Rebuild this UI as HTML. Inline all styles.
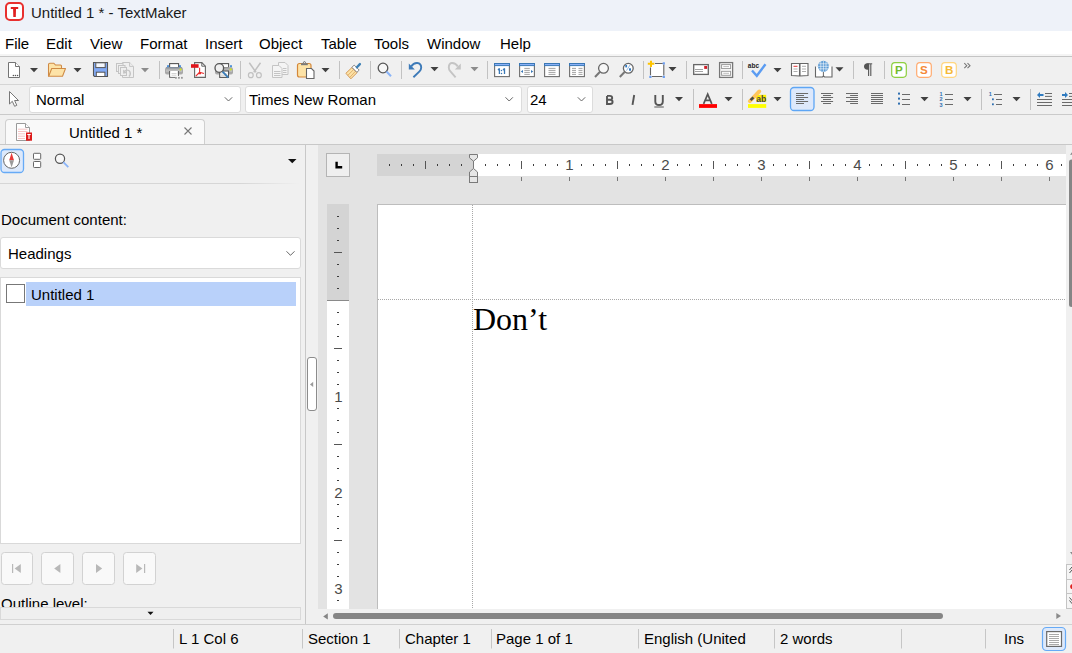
<!DOCTYPE html>
<html><head><meta charset="utf-8">
<style>
*{margin:0;padding:0;box-sizing:border-box}
html,body{width:1072px;height:653px;overflow:hidden;background:#f0f0f0;font-family:"Liberation Sans",sans-serif;color:#000}
.a{position:absolute}
.t{position:absolute;font-size:15px;line-height:15px;white-space:nowrap}
svg{position:absolute;overflow:visible}
</style></head><body>
<!-- title bar -->
<div class="a" style="left:0;top:0;width:1072px;height:31px;background:#eef2f9"></div>
<div class="t" style="left:31px;top:5px;color:#1a1a1a">Untitled 1 * - TextMaker</div>
<!-- menu bar -->
<div class="a" style="left:0;top:31px;width:1072px;height:23px;background:#fff"></div>
<div class="t" style="left:5px;top:36px">File</div>
<div class="t" style="left:46px;top:36px">Edit</div>
<div class="t" style="left:90px;top:36px">View</div>
<div class="t" style="left:140px;top:36px">Format</div>
<div class="t" style="left:205px;top:36px">Insert</div>
<div class="t" style="left:259px;top:36px">Object</div>
<div class="t" style="left:321px;top:36px">Table</div>
<div class="t" style="left:374px;top:36px">Tools</div>
<div class="t" style="left:427px;top:36px">Window</div>
<div class="t" style="left:500px;top:36px">Help</div>
<div class="a" style="left:0;top:54px;width:1072px;height:2px;background:#f4f4f4"></div><div class="a" style="left:0;top:56px;width:1072px;height:1px;background:#c4c4c4"></div>
<!-- toolbar lines -->
<div class="a" style="left:0;top:84px;width:1072px;height:1px;background:#d5d5d5"></div>
<div class="a" style="left:0;top:114px;width:1072px;height:1px;background:#cacaca"></div>
<!-- format toolbar combos -->
<div class="a" style="left:29px;top:86px;width:212px;height:27px;background:#fff;border:1px solid #dcdcdc;border-radius:3px"></div>
<div class="t" style="left:36px;top:92px">Normal</div>
<div class="a" style="left:245px;top:86px;width:277px;height:27px;background:#fff;border:1px solid #dcdcdc;border-radius:3px"></div>
<div class="t" style="left:249px;top:92px">Times New Roman</div>
<div class="a" style="left:527px;top:86px;width:66px;height:27px;background:#fff;border:1px solid #dcdcdc;border-radius:3px"></div>
<div class="t" style="left:530px;top:92px">24</div>
<!-- tab bar -->
<div class="a" style="left:5px;top:119px;width:200px;height:26px;background:#f9f9f9;border:1px solid #cfcfcf;border-bottom:none;border-radius:4px 4px 0 0"></div>
<div class="t" style="left:69px;top:125px">Untitled 1 *</div>
<div class="a" style="left:0;top:144px;width:1072px;height:1px;background:#c8c8c8"></div>
<!-- left panel -->
<div class="a" style="left:0;top:183px;width:300px;height:1px;background:linear-gradient(90deg,#d6d6d6,#d6d6d6 80%,#f0f0f0)"></div>
<div class="t" style="left:1px;top:212px">Document content:</div>
<div class="a" style="left:0;top:237px;width:301px;height:32px;background:#fff;border:1px solid #dadada;border-radius:3px"></div>
<div class="t" style="left:8px;top:246px">Headings</div>
<div class="a" style="left:0;top:277px;width:301px;height:267px;background:#fff;border:1px solid #d9d9d9"></div>
<div class="a" style="left:26px;top:282px;width:270px;height:24px;background:#b9d1fa"></div>
<div class="a" style="left:6px;top:284px;width:19px;height:19px;border:1px solid #777;background:#fff"></div>
<div class="t" style="left:31px;top:287px">Untitled 1</div>
<div class="t" style="left:1px;top:596px">Outline level:</div>
<div class="a" style="left:0;top:607px;width:301px;height:13px;background:#efefef;border:1px solid #d9d9d9"></div>
<!-- splitter -->
<div class="a" style="left:305px;top:145px;width:1px;height:479px;background:#c8c8c8"></div>
<div class="a" style="left:306px;top:145px;width:12px;height:479px;background:#f0f0f0"></div>
<!-- doc area -->
<div class="a" style="left:318px;top:145px;width:748px;height:464px;background:#e3e3e3"></div>
<div class="a" style="left:377px;top:204px;width:689px;height:405px;background:#fff;border-top:1px solid #bdbdbd;border-left:1px solid #bdbdbd"></div>
<div class="a" style="left:378px;top:299px;width:688px;height:1px;background:repeating-linear-gradient(90deg,#a8a8a8 0 1px,transparent 1px 2px)"></div>
<div class="a" style="left:472px;top:205px;width:1px;height:404px;background:repeating-linear-gradient(180deg,#a8a8a8 0 1px,transparent 1px 2px)"></div>
<div class="a" style="left:473px;top:299px;font-family:'Liberation Serif',serif;font-size:32px;line-height:40px;white-space:nowrap">Don’t</div>
<!-- rulers -->
<div class="a" style="left:377px;top:154px;width:689px;height:22px;background:#fff"></div>
<div class="a" style="left:377px;top:154px;width:96px;height:22px;background:#d4d4d4"></div>
<div class="a" style="left:327px;top:204px;width:22px;height:405px;background:#fff"></div>
<div class="a" style="left:327px;top:204px;width:22px;height:96px;background:#d4d4d4"></div>
<div class="a" style="left:326px;top:153px;width:24px;height:24px;background:#efefef;border:1px solid #b4b4b4"></div>
<svg style="left:0;top:0" width="1072" height="653" viewBox="0 0 1072 653">
<rect x="389" y="164" width="1" height="2" fill="#3c3c3c"/>
<rect x="401" y="164" width="1" height="2" fill="#3c3c3c"/>
<rect x="413" y="164" width="1" height="2" fill="#3c3c3c"/>
<rect x="437" y="164" width="1" height="2" fill="#3c3c3c"/>
<rect x="449" y="164" width="1" height="2" fill="#3c3c3c"/>
<rect x="461" y="164" width="1" height="2" fill="#3c3c3c"/>
<rect x="485" y="164" width="1" height="2" fill="#3c3c3c"/>
<rect x="497" y="164" width="1" height="2" fill="#3c3c3c"/>
<rect x="509" y="164" width="1" height="2" fill="#3c3c3c"/>
<rect x="533" y="164" width="1" height="2" fill="#3c3c3c"/>
<rect x="545" y="164" width="1" height="2" fill="#3c3c3c"/>
<rect x="557" y="164" width="1" height="2" fill="#3c3c3c"/>
<rect x="581" y="164" width="1" height="2" fill="#3c3c3c"/>
<rect x="593" y="164" width="1" height="2" fill="#3c3c3c"/>
<rect x="605" y="164" width="1" height="2" fill="#3c3c3c"/>
<rect x="629" y="164" width="1" height="2" fill="#3c3c3c"/>
<rect x="641" y="164" width="1" height="2" fill="#3c3c3c"/>
<rect x="653" y="164" width="1" height="2" fill="#3c3c3c"/>
<rect x="677" y="164" width="1" height="2" fill="#3c3c3c"/>
<rect x="689" y="164" width="1" height="2" fill="#3c3c3c"/>
<rect x="701" y="164" width="1" height="2" fill="#3c3c3c"/>
<rect x="725" y="164" width="1" height="2" fill="#3c3c3c"/>
<rect x="737" y="164" width="1" height="2" fill="#3c3c3c"/>
<rect x="749" y="164" width="1" height="2" fill="#3c3c3c"/>
<rect x="773" y="164" width="1" height="2" fill="#3c3c3c"/>
<rect x="785" y="164" width="1" height="2" fill="#3c3c3c"/>
<rect x="797" y="164" width="1" height="2" fill="#3c3c3c"/>
<rect x="821" y="164" width="1" height="2" fill="#3c3c3c"/>
<rect x="833" y="164" width="1" height="2" fill="#3c3c3c"/>
<rect x="845" y="164" width="1" height="2" fill="#3c3c3c"/>
<rect x="869" y="164" width="1" height="2" fill="#3c3c3c"/>
<rect x="881" y="164" width="1" height="2" fill="#3c3c3c"/>
<rect x="893" y="164" width="1" height="2" fill="#3c3c3c"/>
<rect x="917" y="164" width="1" height="2" fill="#3c3c3c"/>
<rect x="929" y="164" width="1" height="2" fill="#3c3c3c"/>
<rect x="941" y="164" width="1" height="2" fill="#3c3c3c"/>
<rect x="965" y="164" width="1" height="2" fill="#3c3c3c"/>
<rect x="977" y="164" width="1" height="2" fill="#3c3c3c"/>
<rect x="989" y="164" width="1" height="2" fill="#3c3c3c"/>
<rect x="1013" y="164" width="1" height="2" fill="#3c3c3c"/>
<rect x="1025" y="164" width="1" height="2" fill="#3c3c3c"/>
<rect x="1037" y="164" width="1" height="2" fill="#3c3c3c"/>
<rect x="1061" y="164" width="1" height="2" fill="#3c3c3c"/>
<rect x="425" y="161" width="1" height="8" fill="#555"/>
<rect x="521" y="161" width="1" height="8" fill="#555"/>
<rect x="617" y="161" width="1" height="8" fill="#555"/>
<rect x="713" y="161" width="1" height="8" fill="#555"/>
<rect x="809" y="161" width="1" height="8" fill="#555"/>
<rect x="905" y="161" width="1" height="8" fill="#555"/>
<rect x="1001" y="161" width="1" height="8" fill="#555"/>
<rect x="521" y="177" width="1" height="4" fill="#777"/>
<rect x="569" y="177" width="1" height="4" fill="#777"/>
<rect x="617" y="177" width="1" height="4" fill="#777"/>
<rect x="665" y="177" width="1" height="4" fill="#777"/>
<rect x="713" y="177" width="1" height="4" fill="#777"/>
<rect x="761" y="177" width="1" height="4" fill="#777"/>
<rect x="809" y="177" width="1" height="4" fill="#777"/>
<rect x="857" y="177" width="1" height="4" fill="#777"/>
<rect x="905" y="177" width="1" height="4" fill="#777"/>
<rect x="953" y="177" width="1" height="4" fill="#777"/>
<rect x="1001" y="177" width="1" height="4" fill="#777"/>
<rect x="1049" y="177" width="1" height="4" fill="#777"/>
<text x="569.5" y="170.2" text-anchor="middle" font-family="Liberation Sans" font-size="15" fill="#4a4a4a">1</text>
<text x="665.5" y="170.2" text-anchor="middle" font-family="Liberation Sans" font-size="15" fill="#4a4a4a">2</text>
<text x="761.5" y="170.2" text-anchor="middle" font-family="Liberation Sans" font-size="15" fill="#4a4a4a">3</text>
<text x="857.5" y="170.2" text-anchor="middle" font-family="Liberation Sans" font-size="15" fill="#4a4a4a">4</text>
<text x="953.5" y="170.2" text-anchor="middle" font-family="Liberation Sans" font-size="15" fill="#4a4a4a">5</text>
<text x="1049.5" y="170.2" text-anchor="middle" font-family="Liberation Sans" font-size="15" fill="#4a4a4a">6</text>
<path d="M469.5,154.5 H477.5 V157.8 L473.5,161.2 L469.5,157.8 Z M469.5,176.5 V172 L473.5,168.5 L477.5,172 V176.5 Z" fill="#e6e6e6" stroke="#7a7a7a" stroke-width="1"/>
<rect x="469.5" y="176.5" width="8" height="6" fill="#e6e6e6" stroke="#7a7a7a" stroke-width="1"/>
<path d="M473.5,161 V168.5" stroke="#7a7a7a" stroke-width="1"/>
<rect x="337" y="216" width="2" height="1" fill="#3c3c3c"/>
<rect x="337" y="228" width="2" height="1" fill="#3c3c3c"/>
<rect x="337" y="240" width="2" height="1" fill="#3c3c3c"/>
<rect x="334" y="252" width="8" height="1" fill="#555"/>
<rect x="337" y="264" width="2" height="1" fill="#3c3c3c"/>
<rect x="337" y="276" width="2" height="1" fill="#3c3c3c"/>
<rect x="337" y="288" width="2" height="1" fill="#3c3c3c"/>
<rect x="337" y="312" width="2" height="1" fill="#3c3c3c"/>
<rect x="337" y="324" width="2" height="1" fill="#3c3c3c"/>
<rect x="337" y="336" width="2" height="1" fill="#3c3c3c"/>
<rect x="334" y="348" width="8" height="1" fill="#555"/>
<rect x="337" y="360" width="2" height="1" fill="#3c3c3c"/>
<rect x="337" y="372" width="2" height="1" fill="#3c3c3c"/>
<rect x="337" y="384" width="2" height="1" fill="#3c3c3c"/>
<text x="338.5" y="401.6" text-anchor="middle" font-family="Liberation Sans" font-size="15" fill="#4a4a4a">1</text>
<rect x="337" y="408" width="2" height="1" fill="#3c3c3c"/>
<rect x="337" y="420" width="2" height="1" fill="#3c3c3c"/>
<rect x="337" y="432" width="2" height="1" fill="#3c3c3c"/>
<rect x="334" y="444" width="8" height="1" fill="#555"/>
<rect x="337" y="456" width="2" height="1" fill="#3c3c3c"/>
<rect x="337" y="468" width="2" height="1" fill="#3c3c3c"/>
<rect x="337" y="480" width="2" height="1" fill="#3c3c3c"/>
<text x="338.5" y="497.6" text-anchor="middle" font-family="Liberation Sans" font-size="15" fill="#4a4a4a">2</text>
<rect x="337" y="504" width="2" height="1" fill="#3c3c3c"/>
<rect x="337" y="516" width="2" height="1" fill="#3c3c3c"/>
<rect x="337" y="528" width="2" height="1" fill="#3c3c3c"/>
<rect x="334" y="540" width="8" height="1" fill="#555"/>
<rect x="337" y="552" width="2" height="1" fill="#3c3c3c"/>
<rect x="337" y="564" width="2" height="1" fill="#3c3c3c"/>
<rect x="337" y="576" width="2" height="1" fill="#3c3c3c"/>
<text x="338.5" y="593.6" text-anchor="middle" font-family="Liberation Sans" font-size="15" fill="#4a4a4a">3</text>
<rect x="337" y="600" width="2" height="1" fill="#3c3c3c"/>
<rect x="327" y="300" width="22" height="1" fill="#8a8a8a"/>
</svg>
<!-- v scrollbar -->
<div class="a" style="left:1066px;top:145px;width:6px;height:464px;background:#f0f0f0"></div>
<!-- h scrollbar -->
<div class="a" style="left:318px;top:609px;width:754px;height:15px;background:#f0f0f0"></div>
<div class="a" style="left:333px;top:613px;width:610px;height:6px;background:#858585;border-radius:3px"></div>
<!-- status bar -->
<div class="a" style="left:0;top:624px;width:1072px;height:1px;background:#d0d0d0"></div>
<div class="t" style="left:179px;top:631px">L 1 Col 6</div>
<div class="t" style="left:308px;top:631px">Section 1</div>
<div class="t" style="left:405px;top:631px">Chapter 1</div>
<div class="t" style="left:496px;top:631px">Page 1 of 1</div>
<div class="t" style="left:644px;top:631px">English (United</div>
<div class="t" style="left:780px;top:631px">2 words</div>
<div class="t" style="left:1004px;top:631px">Ins</div>
<svg style="left:0;top:0" width="1072" height="653" viewBox="0 0 1072 653">
<!-- app icon -->
<rect x="6" y="3" width="17" height="17" rx="4" fill="#fff" stroke="#e8302f" stroke-width="2"/>
<path d="M10.8,7 H18.2 V9 H16 L15.8,17 H13.3 L13.1,9 H10.8 Z" fill="#e02020"/>
<!-- ===== toolbar 1 ===== -->
<g fill="#404040">
<path d="M30.0,68.0 H38.0 L34.0,72.2 Z"/>
<path d="M73.5,68.0 H81.5 L77.5,72.2 Z"/>
<path d="M321.5,68.0 H329.5 L325.5,72.2 Z"/>
<path d="M430.5,67.0 H438.5 L434.5,71.2 Z"/>
<path d="M668.5,67.0 H676.5 L672.5,71.2 Z"/>
<path d="M773.5,68.0 H781.5 L777.5,72.2 Z"/>
<path d="M835.5,67.2 H843.5 L839.5,71.4 Z"/>
</g>
<g fill="#8c8c8c">
<path d="M141.0,68.0 H149.0 L145.0,72.2 Z"/>
<path d="M470.5,67.0 H478.5 L474.5,71.2 Z"/>
</g>
<g stroke="#c2c2c2" stroke-width="1">
<path d="M159.5,61 V79 M240.5,61 V79 M339.5,61 V79 M370.5,61 V79 M401.5,61 V79 M487.5,61 V79 M643.5,61 V79 M686.5,61 V79 M742.5,61 V79 M853.5,61 V79 M884.5,61 V79"/>
</g>
<!-- new doc -->
<path d="M8.5,62.5 H15.5 L19.5,66.5 V77.5 H8.5 Z" fill="#fff" stroke="#747474"/>
<path d="M15.5,62.5 V66.5 H19.5" fill="#fff" stroke="#747474"/>
<circle cx="13.35" cy="75.4" r="0.75" fill="#555"/><circle cx="15.45" cy="75.4" r="0.75" fill="#555"/><circle cx="17.55" cy="75.4" r="0.75" fill="#555"/>
<!-- open folder -->
<path d="M48.5,76.5 V64.5 Q48.5,63.2 49.8,63.2 H53.8 L55.5,65 H60.5 Q61.5,65 61.5,66 V68.5" fill="#fde3a7" stroke="#cf8a45" stroke-width="1.05"/>
<path d="M48.7,76.3 L51.7,68.5 H65.5 L62.5,76.3 Z" fill="#fde3a7" stroke="#cf8a45" stroke-width="1.05" stroke-linejoin="round"/>
<!-- save -->
<path d="M93.5,62.5 H107.5 V76.5 H94.5 L93.5,75.5 Z" fill="#82aaf5" stroke="#555" stroke-width="1.1"/>
<rect x="95.8" y="62.8" width="9.4" height="4.8" fill="#f4f7fd" stroke="#555" stroke-width="1"/>
<rect x="96.3" y="72.2" width="8.6" height="4.3" fill="#fff" stroke="#555" stroke-width="1"/>
<!-- disabled revert -->
<g fill="#efefef" stroke="#c4c4c4" stroke-width="1">
<path d="M122.5,62.5 H129.6 L133.5,66.4 V77.5 H122.5 Z"/>
<path d="M129.6,62.5 V66.4 H133.5"/>
<rect x="116.5" y="63.5" width="6.5" height="8"/>
<rect x="118.5" y="65.5" width="6.5" height="8"/>
<rect x="120.5" y="67.5" width="6" height="8"/>
</g>
<path d="M124,72 C125.5,69.5 129,69.5 130,72 C130.8,74 130,75.5 129,76.5" fill="none" stroke="#c4c4c4" stroke-width="1.4"/>
<path d="M123,69.5 L123.2,73.8 L127,73 Z" fill="#c4c4c4"/>
<!-- printer -->
<rect x="167" y="65.2" width="2" height="2.2" fill="#4f92d9"/><rect x="179" y="65.2" width="2" height="2.2" fill="#4f92d9"/>
<rect x="169.6" y="63.6" width="9" height="4" fill="#fff" stroke="#555" stroke-width="1.1"/>
<rect x="165" y="67.3" width="18" height="7.3" rx="2" fill="#a9a9a9"/>
<rect x="166" y="67.3" width="16" height="1" fill="#7a8aa0"/>
<rect x="166" y="69.5" width="16" height="2.5" fill="#bcbcbc"/>
<path d="M180.6,68 L182,69.4 L180.6,70.8 L179.2,69.4 Z" fill="#c9e02a"/>
<path d="M169.7,71 V77.2 H175 M178.3,71 V76" fill="#fff" stroke="#555" stroke-width="1.1"/>
<rect x="170.3" y="71" width="7.5" height="5.7" fill="#fff"/>
<path d="M171.5,73.5 H176.5 M171.5,75.2 H176.5" stroke="#c8c8c8" stroke-width="0.8"/>
<rect x="175" y="76.9" width="1.8" height="1.8" fill="#999"/><rect x="178" y="76.9" width="1.8" height="1.8" fill="#999"/><rect x="181" y="76.9" width="1.8" height="1.8" fill="#999"/>
<!-- pdf -->
<path d="M194.6,62.6 H201.8 L205.4,66.2 V77.4 H194.6 Z" fill="#fff" stroke="#666" stroke-width="1.1"/>
<path d="M201.8,62.6 V66.2 H205.4" fill="none" stroke="#666" stroke-width="1"/>
<rect x="191" y="64.2" width="7.6" height="3.6" fill="#e0141b"/>
<path d="M199.6,67.8 V72.2 L195.8,76.2 M199.6,72.2 L203.9,73.6 M198.2,73.6 H201" fill="none" stroke="#ea2a2a" stroke-width="1.1"/>
<!-- print preview -->
<rect x="230" y="65.2" width="2" height="2.2" fill="#4f92d9"/>
<rect x="219.6" y="63.6" width="9" height="4" fill="#fff" stroke="#555" stroke-width="1.1"/>
<rect x="215" y="67.3" width="18" height="7.3" rx="2" fill="#a9a9a9"/>
<rect x="216" y="69.5" width="16" height="2.5" fill="#bcbcbc"/>
<path d="M230.8,68 L232.2,69.4 L230.8,70.8 L229.4,69.4 Z" fill="#c9e02a"/>
<rect x="219.7" y="71" width="8.8" height="6.4" fill="#fff" stroke="#555" stroke-width="1.1"/>
<path d="M221,74 H227 M221,75.7 H227" stroke="#c8c8c8" stroke-width="0.8"/>
<circle cx="219.3" cy="68" r="4.3" fill="#f0f0f0" stroke="#555" stroke-width="1.3"/>
<path d="M222.6,71.6 L228.3,77.6" stroke="#3b7db8" stroke-width="2"/>
<!-- scissors disabled -->
<path d="M249.3,62.8 L256,72.2 M260.5,62.8 L253.8,72.2" stroke="#c0c0c0" stroke-width="1.5" fill="none"/>
<ellipse cx="250.8" cy="75.2" rx="2.4" ry="2.5" fill="none" stroke="#c0c0c0" stroke-width="1.2"/>
<ellipse cx="258.9" cy="75.2" rx="2.4" ry="2.5" fill="none" stroke="#c0c0c0" stroke-width="1.2"/>
<!-- copy disabled -->
<g fill="#f4f4f4" stroke="#c4c4c4" stroke-width="1">
<path d="M278.5,62.5 H285 L288,65.5 V74.5 H278.5 Z"/>
<path d="M272.5,65.5 H279 L282,68.5 V77.5 H272.5 Z"/>
<path d="M274,71.5 H280.5 M274,73.5 H280.5 M274,75.5 H280.5 M283,68.5 H286.5 M283,70.5 H286.5 M283,72.5 H286.5" fill="none"/>
</g>
<!-- paste -->
<rect x="297.5" y="63.5" width="13.5" height="13.5" rx="2" fill="#fde3a7" stroke="#d4883a" stroke-width="1.2"/>
<rect x="301" y="63.3" width="6.8" height="1.9" fill="#7a7a7a"/><path d="M302.9,63.3 L304.45,61.1 L306,63.3 Z" fill="#fff" stroke="#7a7a7a" stroke-width="0.9"/>
<path d="M306.5,68.5 H311.5 L314,71 V78.5 H306.5 Z" fill="#fff" stroke="#666" stroke-width="1.1"/>
<!-- brush -->
<g transform="translate(-0.6,0.8)">
<path d="M346.5,72.5 L352.5,66.8 L357.5,72 L351.5,78 Z" fill="#fde3a7" stroke="#d49a55" stroke-width="1"/>
<path d="M348.5,74.5 L354.5,68.5 M350.5,76.5 L356,70.5" stroke="#d49a55" stroke-width="0.7"/>
<path d="M352.5,66.5 L354.8,64.3 L359.8,69.3 L357.5,71.5 Z" fill="#fff" stroke="#888"/>
<path d="M357.5,66.5 L360.5,63.3" stroke="#3d80b5" stroke-width="2.4" stroke-linecap="round"/>
</g>
<!-- search -->
<circle cx="383" cy="68" r="4.8" fill="#f7f7f7" stroke="#555" stroke-width="1.3"/>
<path d="M386.5,71.5 L391,76.2" stroke="#8ab4f8" stroke-width="2"/>
<!-- undo -->
<path d="M411.2,66.4 C413,63.6 415.3,62.9 417.2,63 C419.8,63.3 421.2,65.5 421.2,67.5 C421.2,69 420.5,70.3 419.5,71.3 L413.4,77.3" fill="none" stroke="#3d7ab8" stroke-width="1.9"/>
<path d="M408.8,63.4 V69.4 H414.8 Z" fill="#3d7ab8"/>
<!-- redo disabled -->
<path d="M457.8,66.4 C456,63.6 453.7,62.9 451.8,63 C450,63.3 448.8,65.5 448.8,67.5 C448.8,69 449.4,70.3 450.2,71.2 L455.6,77.3" fill="none" stroke="#c4c4c4" stroke-width="1.9"/>
<path d="M460.8,63.4 V69.4 H454.8 Z" fill="#c4c4c4"/>
<!-- view icons -->
<g fill="#fff" stroke="#6e6e6e" stroke-width="1.1">
<rect x="494.6" y="64" width="14.8" height="12.6"/>
<rect x="519.6" y="64" width="14.8" height="12.6"/>
<rect x="544.6" y="64" width="14.8" height="12.6"/>
<rect x="569.6" y="64" width="14.8" height="12.6"/>
</g>
<g fill="#8ab0f8" stroke="#3a78b5" stroke-width="1">
<rect x="494.5" y="63.5" width="15" height="2.1"/>
<rect x="519.5" y="63.5" width="15" height="2.1"/>
<rect x="544.5" y="63.5" width="15" height="2.1"/>
<rect x="569.5" y="63.5" width="15" height="2.1"/>
</g>
<path d="M498,69.9 L499.4,68.6 V74 M503,69.9 L504.5,68.6 V74" fill="none" stroke="#3a78b5" stroke-width="1.3" stroke-linejoin="bevel"/><circle cx="501.5" cy="70.6" r="0.75" fill="#3a78b5"/><circle cx="501.5" cy="73.4" r="0.75" fill="#3a78b5"/>
<g stroke="#8a8a8a" stroke-width="0.8">
<path d="M524.3,68.4 H529.8 M524.3,70.4 H529.8 M524.3,72.4 H529.8 M524.3,74.4 H529.8"/>
<path d="M548.5,68.4 H555.5 M548.5,70.4 H555.5 M548.5,72.4 H555.5 M548.5,74.4 H555.5"/>
<path d="M572,68.4 H576 M572,70.4 H576 M572,72.4 H576 M572,74.4 H576 M578.5,68.4 H582.5 M578.5,70.4 H582.5 M578.5,72.4 H582.5 M578.5,74.4 H582.5"/>
</g>
<path d="M520.8,71.5 L523,69.9 V73.1 Z M533.2,71.5 L531,69.9 V73.1 Z" fill="#3a78b5"/>
<!-- zoom -->
<circle cx="603.5" cy="68.3" r="4.9" fill="#f7f7f7" stroke="#666" stroke-width="1.3"/>
<path d="M599.8,72 L595,77" stroke="#777" stroke-width="2"/>
<circle cx="628.3" cy="68.3" r="4.9" fill="#fff" stroke="#666" stroke-width="1.3"/>
<path d="M624.6,72 L619.8,77" stroke="#777" stroke-width="2"/>
<path d="M626.5,70.6 L630,65" stroke="#7aa6d8" stroke-width="0.8"/>
<rect x="625.3" y="65" width="1.8" height="2.4" fill="#2f78c0"/><rect x="629" y="68.3" width="2" height="2.4" fill="#2f78c0"/>
<!-- frame -->
<rect x="651" y="64" width="12.3" height="12.2" fill="#fff"/>
<path d="M655,63.5 H662.8 M651.8,76.5 H662.4 M650.5,67.4 V75.3 M663.8,64.5 V75.6" stroke="#666" stroke-width="1.1"/>
<g fill="#6a9cf0"><rect x="649.3" y="75.8" width="2.2" height="2.2"/><rect x="662.7" y="62.3" width="2.2" height="2.2"/><rect x="662.7" y="75.8" width="2.2" height="2.2"/></g>
<path d="M647.8,63.8 H654.3 M651,60.8 V67" stroke="#ffc400" stroke-width="2"/>
<!-- envelope -->
<rect x="693.7" y="64.6" width="14.6" height="9.8" fill="#fff" stroke="#666" stroke-width="1.3"/>
<rect x="704.2" y="66" width="2.9" height="2.9" fill="#d0202a"/>
<path d="M695,69.5 H703 M695,71.5 H703" stroke="#999" stroke-width="0.9"/>
<!-- two boxes -->
<rect x="719.6" y="62.6" width="13" height="14.8" fill="#fff" stroke="#777" stroke-width="1.3"/>
<rect x="721.6" y="64.6" width="9" height="4" fill="#fff" stroke="#999" stroke-width="1"/>
<rect x="721.6" y="71.3" width="9" height="4" fill="#fff" stroke="#999" stroke-width="1"/>
<path d="M723.3,66.6 H729 M723.3,73.3 H729" stroke="#aaa" stroke-width="0.8"/>
<!-- spell -->
<text x="747.8" y="67.8" font-family="Liberation Sans" font-weight="bold" font-size="6.5" fill="#222">abc</text>
<path d="M752,70.5 L756.8,75.8 L765.5,64.2" fill="none" stroke="#5b9cf2" stroke-width="2.4"/>
<!-- book -->
<path d="M791.5,63.5 H799.5 V76 L791.5,75.5 Z M800,76 V63.5 H808 V75.5 Z" fill="#fff" stroke="#666" stroke-width="1.1"/>
<path d="M793.5,66.3 H797.5" stroke="#e02020" stroke-width="0.9"/>
<path d="M793.5,69 H797.5 M793.5,71.5 H797.5 M802,66.3 H806 M802,69 H806 M802,71.5 H806" stroke="#999" stroke-width="0.8"/>
<!-- globe book -->
<path d="M815.5,66.5 V77 H822.5 L823.5,76 L824.5,77 H832 V66.5" fill="#fff" stroke="#666" stroke-width="1.1"/>
<circle cx="823.4" cy="66.3" r="5.5" fill="#5b9bd5"/>
<path d="M818,66.3 H829 M823.4,61 V71.5 M819,63.8 H828 M819,68.8 H828 M820.8,61.5 V71 M826,61.5 V71" stroke="#fff" stroke-width="0.6"/>
<path d="M823.4,72 V76.5" stroke="#666"/>
<!-- pilcrow -->
<path d="M868.6,64 V75.9 M870.8,64 V75.9" stroke="#555" stroke-width="1.1"/>
<path d="M866.5,63.8 H872.2" stroke="#555" stroke-width="1"/>
<path d="M869.1,63.4 H866.8 C864.8,63.4 864,65.2 864,66.5 C864,68.2 865.2,69.8 867.5,69.8 H869.1 Z" fill="#555"/>
<!-- P S B -->
<rect x="891.7" y="62.7" width="14.6" height="14.6" rx="3.2" fill="#fff" stroke="#8dcf40" stroke-width="1.2"/>
<rect x="916.7" y="62.7" width="14.6" height="14.6" rx="3.2" fill="#fff" stroke="#ffab70" stroke-width="1.2"/>
<rect x="941.7" y="62.7" width="14.6" height="14.6" rx="3.2" fill="#fff" stroke="#ffd680" stroke-width="1.2"/>
<text x="895" y="74.1" font-family="Liberation Sans" font-weight="bold" font-size="11.6" fill="#72bb2f">P</text>
<text x="919.9" y="74.1" font-family="Liberation Sans" font-weight="bold" font-size="11.6" fill="#f58a3a">S</text>
<text x="944.9" y="74.1" font-family="Liberation Sans" font-weight="bold" font-size="11.6" fill="#f5b937">B</text>
<path d="M964.3,63.2 L966.8,65.7 L964.3,68.2 M967.5,63.2 L970,65.7 L967.5,68.2" fill="none" stroke="#777" stroke-width="1.1"/>
</svg>

<svg style="left:0;top:0" width="1072" height="653" viewBox="0 0 1072 653">
<!-- cursor -->
<path d="M9.5,91.5 V104 L12.3,101.3 L14.6,106.3 L16.8,105.3 L14.6,100.5 H18.5 Z" fill="#fff" stroke="#777" stroke-width="1" stroke-linejoin="round"/>
<!-- combo chevrons -->
<g fill="none" stroke="#666" stroke-width="1">
<path d="M224.8,97.3 L228.5,101 L232.2,97.3"/>
<path d="M505.5,97.3 L509.2,101 L512.9,97.3"/>
<path d="M577.8,97.3 L581.5,101 L585.2,97.3"/>
</g>
<!-- B I U -->
<path d="M607,95.9 H609.8 C611.5,95.9 612.2,96.8 612.2,98 C612.2,99.2 611.3,99.8 609.8,99.8 H607 M609.8,99.8 C611.8,99.8 612.6,100.6 612.6,102 C612.6,103.5 611.7,104 609.8,104 H607 V95.9" fill="none" stroke="#555" stroke-width="1.9"/>
<path d="M634.2,95 L632.5,104.8" stroke="#555" stroke-width="1.9"/>
<path d="M655.3,95 V101.5 C655.3,104 656.8,105 659,105 C661.2,105 662.8,104 662.8,101.5 V95" fill="none" stroke="#555" stroke-width="1.9"/>
<path d="M654.3,107 H663.8" stroke="#555" stroke-width="1"/>
<g fill="#404040">
<path d="M675.0,97.0 H683.0 L679.0,101.2 Z"/>
<path d="M724.5,97.0 H732.5 L728.5,101.2 Z"/>
<path d="M773.5,97.0 H781.5 L777.5,101.2 Z"/>
<path d="M920.5,97.0 H928.5 L924.5,101.2 Z"/>
<path d="M963.5,97.0 H971.5 L967.5,101.2 Z"/>
<path d="M1012.5,97.0 H1020.5 L1016.5,101.2 Z"/>
</g>
<g stroke="#c2c2c2" stroke-width="1">
<path d="M693.5,89 V110 M742.5,89 V110 M981.5,89 V110 M1030.5,89 V110"/>
</g>
<!-- font color A -->
<path d="M703.6,103.8 L707.7,94.2 L711.8,103.8 M705.2,100.3 H710.2" fill="none" stroke="#555" stroke-width="1.7"/>
<rect x="699" y="104.1" width="18" height="3.8" fill="#f00"/>
<!-- highlighter -->
<rect x="748" y="104.1" width="18.2" height="3.8" fill="#ffff00"/>
<rect x="756" y="94.8" width="10.2" height="7" fill="#ffee00"/>
<text x="756.3" y="101.6" font-family="Liberation Sans" font-weight="bold" font-size="8.5" fill="#444">ab</text>
<path d="M749.8,101.2 L759.3,91.4" stroke="#ffc65a" stroke-width="3.8" stroke-linecap="round"/>
<path d="M750.6,100.2 L753.4,97.4" stroke="#4a4a4a" stroke-width="2.6"/>
<!-- align left button -->
<rect x="790.5" y="87.5" width="23.5" height="23" rx="3.5" fill="#dde8fb" stroke="#5ea6f5" stroke-width="1.3"/>
<g stroke="#6a6a6a" stroke-width="1">
<path d="M796,93.5 H808.1 M796,95.5 H804 M796,97.5 H808.1 M796,99.5 H804 M796,101.5 H808.1 M796,103.5 H804"/>
<path d="M821,93.5 H833.1 M823,95.5 H831 M821,97.5 H833.1 M823,99.5 H831 M821,101.5 H833.1 M823,103.5 H831"/>
<path d="M846,93.5 H858 M850.1,95.5 H858 M846,97.5 H858 M850.1,99.5 H858 M846,101.5 H858 M850.1,103.5 H858"/>
<path d="M871,93.5 H883 M871,95.5 H883 M871,97.5 H883 M871,99.5 H883 M871,101.5 H883 M871,103.5 H883"/>
</g>
<!-- bullets -->
<g fill="#2f6fb0"><rect x="898" y="92.6" width="2" height="2"/><rect x="898" y="97.6" width="2" height="2"/><rect x="898" y="102.6" width="2" height="2"/></g>
<path d="M902,94.5 H910 M902,99.5 H910 M902,104.5 H910" stroke="#6a6a6a" stroke-width="1"/>
<!-- numbered -->
<text x="939.5" y="95.5" font-family="Liberation Sans" font-weight="bold" font-size="5.5" fill="#2f6fb0">1</text>
<text x="939.5" y="101" font-family="Liberation Sans" font-weight="bold" font-size="5.5" fill="#2f6fb0">2</text>
<text x="939.5" y="106.5" font-family="Liberation Sans" font-weight="bold" font-size="5.5" fill="#2f6fb0">3</text>
<path d="M945,94.5 H953 M945,99.5 H953 M945,104.5 H953" stroke="#6a6a6a" stroke-width="1"/>
<!-- outline -->
<text x="988.7" y="95.5" font-family="Liberation Sans" font-weight="bold" font-size="5.5" fill="#2f6fb0">1</text>
<g fill="#2f6fb0"><rect x="992" y="98.4" width="1.8" height="1.8"/><rect x="992" y="103.4" width="1.8" height="1.8"/></g>
<path d="M994,94.5 H1002 M996,99.5 H1002 M996,104.5 H1002" stroke="#6a6a6a" stroke-width="1"/>
<!-- indent -->
<path d="M1037,95 L1040,92 V98 Z" fill="#2f7bc0"/>
<path d="M1039.5,95 H1043.5" stroke="#2f7bc0" stroke-width="2"/>
<path d="M1045,93.5 H1052 M1045,96.4 H1052 M1037,99.5 H1052 M1037,102.5 H1052 M1037,105.5 H1052" stroke="#6a6a6a" stroke-width="1"/>
<path d="M1068,95 L1065,92 V98 Z" fill="#2f7bc0"/>
<path d="M1062,95 H1066" stroke="#2f7bc0" stroke-width="2"/>
<path d="M1069,93.5 H1073 M1069,96.4 H1073 M1062,99.5 H1073 M1062,102.5 H1073 M1062,105.5 H1073" stroke="#6a6a6a" stroke-width="1"/>
<!-- tab doc icon -->
<path d="M16.5,123.5 H25.5 L29.5,127.5 V140.5 H16.5 Z" fill="#fff" stroke="#9a9a9a" stroke-width="1"/>
<path d="M25.5,123.5 V127.5 H29.5" fill="#fff" stroke="#9a9a9a"/>
<path d="M18,129.2 H27.5 M18,131.5 H27.5 M18,133.8 H25 M18,136.2 H25 M18,138.5 H25" stroke="#f4b8b8" stroke-width="0.8"/>
<rect x="26" y="132.5" width="6" height="8.2" fill="#dd1c1c"/>
<path d="M27.3,134.5 H30.7 M29,134.5 V139" stroke="#fff" stroke-width="1.1"/>
<!-- tab close -->
<path d="M184.5,127.5 L191.5,134.5 M191.5,127.5 L184.5,134.5" stroke="#777" stroke-width="1.1"/>
<!-- left panel icons -->
<rect x="1" y="149.5" width="22.5" height="23" rx="3.5" fill="#dde9fb" stroke="#66aaf6" stroke-width="1.3"/>
<circle cx="11.6" cy="160.3" r="8" fill="#fff" stroke="#666" stroke-width="1"/>
<path d="M11.6,152.8 L14,160.3 H9.2 Z" fill="#e83a3a"/>
<path d="M11.6,167.6 L14,160.3 H9.2 Z" fill="#9a9a9a"/>
<rect x="33.5" y="153.3" width="7.2" height="6" rx="0.8" fill="#fff" stroke="#666" stroke-width="1"/>
<rect x="33.5" y="161.5" width="7.2" height="6" rx="0.8" fill="#fff" stroke="#666" stroke-width="1"/>
<circle cx="60" cy="158.8" r="4.6" fill="#f7f7f7" stroke="#555" stroke-width="1.2"/>
<path d="M63.3,162.2 L68.3,167.2" stroke="#8ab4f8" stroke-width="1.8"/>
<path d="M288,159 H296.5 L292.25,163.3 Z" fill="#111"/>
<!-- headings chevron -->
<path d="M286.5,251.3 L290.5,255.3 L294.5,251.3" fill="none" stroke="#666" stroke-width="1"/>
<!-- checkbox -->
<rect x="6.5" y="284.5" width="18" height="18" fill="#fff" stroke="#777" stroke-width="1"/>
<!-- nav buttons -->
<g fill="#f9f9f9" stroke="#d2d2d2" stroke-width="1">
<rect x="1.5" y="552.5" width="31" height="32" rx="3"/>
<rect x="41.5" y="552.5" width="32" height="32" rx="3"/>
<rect x="82.5" y="552.5" width="32" height="32" rx="3"/>
<rect x="123.5" y="552.5" width="32" height="32" rx="3"/>
</g>
<g fill="#b8b8b8">
<rect x="12" y="564" width="1.2" height="9"/><path d="M20.8,564 V573 L14.6,568.5 Z"/>
<path d="M60.4,564 V573 L54.2,568.5 Z"/>
<path d="M96,564 V573 L102.2,568.5 Z"/>
<path d="M136.2,564 V573 L142.4,568.5 Z"/><rect x="144" y="564" width="1.2" height="9"/>
</g>
<path d="M147.5,611.7 H153.5 L150.5,615 Z" fill="#111"/>
<!-- splitter handle -->
<rect x="307.5" y="357.5" width="9" height="53" rx="2.5" fill="#fff" stroke="#8c8c8c" stroke-width="1"/>
<path d="M313.2,381.8 V387 L310,384.4 Z" fill="#9a9a9a"/>
<!-- ruler tab stop box -->
<path d="M336.6,161.8 V167.2 H342.2" fill="none" stroke="#000" stroke-width="2.4"/>
<!-- h scrollbar arrows -->
<path d="M327.8,613.3 V619.6 L323.2,616.45 Z" fill="#858585"/>
<path d="M1056.3,613 V619 L1061,616 Z" fill="#8a8a8a"/>
<!-- v scrollbar -->
<path d="M1070,154.7 L1073,151 L1076,154.7 Z" fill="#888"/>
<rect x="1069" y="159.6" width="5" height="147.3" rx="2.5" fill="#858585"/>
<path d="M1070,552 H1076 L1073,556 Z" fill="#888"/>
<g fill="#f5f5f5" stroke="#c4c4c4" stroke-width="1"><rect x="1066.5" y="564.5" width="10" height="15"/><rect x="1066.5" y="579.5" width="10" height="14"/><rect x="1066.5" y="593.5" width="10" height="15"/></g>
<circle cx="1072.8" cy="586.6" r="2.6" fill="#e02020"/>
<path d="M1069.5,573 L1072,570 L1074.5,573 M1069.5,570 L1072,567 L1074.5,570" fill="none" stroke="#555" stroke-width="1"/>
<path d="M1069.5,597.5 L1072,600.5 L1074.5,597.5 M1069.5,600.5 L1072,603.5 L1074.5,600.5" fill="none" stroke="#555" stroke-width="1"/>
<!-- status view button -->
<rect x="1042.5" y="627.5" width="23" height="23" rx="4" fill="#dde9fb" stroke="#66aaf6" stroke-width="1.2"/>
<rect x="1046.7" y="631.6" width="14.8" height="14.8" fill="#fff" stroke="#6a6a6a" stroke-width="1.2"/>
<path d="M1049,634.5 H1059 M1049,636.5 H1059 M1049,638.5 H1059 M1049,640.5 H1059 M1049,642.5 H1059 M1049,644.5 H1059" stroke="#a0a0a0" stroke-width="0.9"/>
<!-- status separators -->
<g stroke="#c6c6c6" stroke-width="1">
<path d="M173.5,629 V648.5 M302.5,629 V648.5 M399.5,629 V648.5 M491.5,629 V648.5 M638.5,629 V648.5 M774.5,629 V648.5 M901.5,629 V648.5 M985.5,629 V648.5"/>
</g>
</svg>

</body></html>
